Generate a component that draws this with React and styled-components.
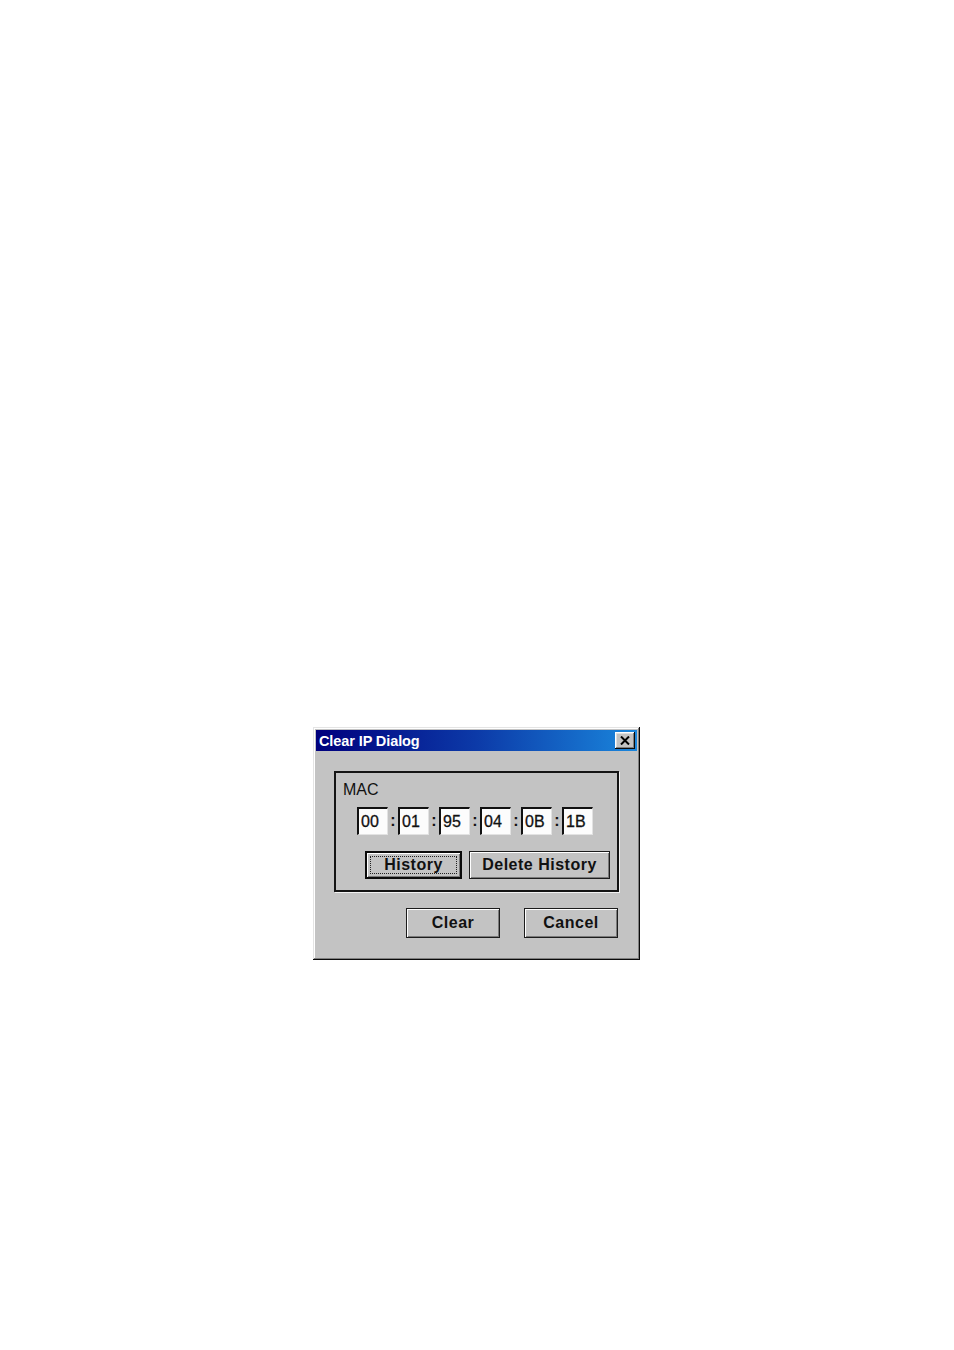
import React from 'react'
import styled, { createGlobalStyle } from 'styled-components'

const GlobalStyle = createGlobalStyle`
  html, body {
    margin: 0;
    padding: 0;
    background: #fff;
  }
  body {
    font-family: "Liberation Sans", Arial, sans-serif;
  }
`

const Page = styled.div`
  width: 954px;
  height: 1350px;
  padding: 727px 0 0 313px;
  box-sizing: border-box;
`

const Window = styled.div`
  width: 327px;
  height: 233px;
  box-sizing: border-box;
  padding: 3px;
  background: #c3c3c3;
  box-shadow: inset -1px -1px #0a0a0a, inset 1px 1px #e4e4e4,
    inset -2px -2px #808080, inset 2px 2px #ffffff;
  display: flex;
  flex-direction: column;
`

const TitleBar = styled.div`
  height: 21px;
  display: flex;
  align-items: center;
  justify-content: space-between;
  padding: 0 2px 0 3px;
  background: linear-gradient(to right, #00007d 0%, #0c3aa8 50%, #1a86dc 100%);
`

const Title = styled.span`
  color: #fff;
  font-weight: bold;
  font-size: 14.5px;
  letter-spacing: -0.1px;
`

const CloseButton = styled.div`
  width: 20px;
  height: 17px;
  background: #c3c3c3;
  box-shadow: inset -1px -1px #0a0a0a, inset 1px 1px #ffffff,
    inset -2px -2px #808080, inset 2px 2px #dfdfdf;
  display: flex;
  align-items: center;
  justify-content: center;
`

const Body = styled.div`
  flex: 1;
  display: flex;
  flex-direction: column;
  padding: 20px 18px 0 18px;
`

const Group = styled.div`
  width: 285px;
  height: 121px;
  box-sizing: border-box;
  border: 2px solid #141414;
  box-shadow: 1px 1px 0 #f2f2f2;
  padding: 8px 0 0 7px;
  display: flex;
  flex-direction: column;
`

const Label = styled.div`
  font-size: 16px;
  line-height: 18px;
  color: #111;
`

const FieldRow = styled.div`
  display: flex;
  align-items: center;
  margin: 8px 0 0 14px;
`

const Field = styled.div`
  width: 31px;
  height: 28px;
  box-sizing: border-box;
  background: #fcfcfc;
  border-top: 2px solid #111;
  border-left: 2px solid #111;
  border-right: 1px solid #e2e2e2;
  border-bottom: 1px solid #e2e2e2;
  padding: 2px 0 0 2px;
  font-size: 16px;
  line-height: 22px;
  color: #111;
  -webkit-text-stroke: 0.3px #111;
`

const Colon = styled.span`
  width: 10px;
  text-align: center;
  font-size: 16px;
  font-weight: bold;
  color: #111;
`

const ButtonRow = styled.div`
  display: flex;
  gap: ${p => p.gap}px;
  margin: ${p => p.margin};
`

const Button = styled.div`
  width: ${p => p.w}px;
  height: ${p => p.h}px;
  box-sizing: border-box;
  display: flex;
  align-items: center;
  justify-content: center;
  background: #c3c3c3;
  font-size: 16px;
  font-weight: bold;
  letter-spacing: 0.5px;
  color: #111;
  box-shadow: inset 0 0 0 1px #1c1c1c, inset 2px 2px #ffffff,
    inset -2px -2px #7a7a7a;
`

const DefaultButton = styled(Button)`
  box-shadow: inset 0 0 0 2px #0a0a0a, inset 3px 3px #ffffff,
    inset -3px -3px #7a7a7a;
`

const FocusRect = styled.span`
  display: flex;
  align-items: center;
  justify-content: center;
  width: calc(100% - 10px);
  height: calc(100% - 10px);
  box-sizing: border-box;
  border: 1px dotted #222;
`

const Footer = styled.div`
  display: flex;
  justify-content: flex-end;
  gap: 24px;
  margin: 16px 1px 0 0;
`

const mac = ['00', '01', '95', '04', '0B', '1B']

export default function App() {
  return (
    <Page>
      <GlobalStyle />
      <Window>
        <TitleBar>
          <Title>Clear IP Dialog</Title>
          <CloseButton>
            <svg width="10" height="9" viewBox="0 0 10 9">
              <path d="M1 0.5 L9 8.5 M9 0.5 L1 8.5" stroke="#000" strokeWidth="2" />
            </svg>
          </CloseButton>
        </TitleBar>
        <Body>
          <Group>
            <Label>MAC</Label>
            <FieldRow>
              {mac.map((v, i) => (
                <React.Fragment key={i}>
                  {i > 0 && <Colon>:</Colon>}
                  <Field>{v}</Field>
                </React.Fragment>
              ))}
            </FieldRow>
            <ButtonRow gap={7} margin="16px 0 0 22px">
              <DefaultButton w={97} h={28}>
                <FocusRect>History</FocusRect>
              </DefaultButton>
              <Button w={141} h={28}>Delete History</Button>
            </ButtonRow>
          </Group>
          <Footer>
            <Button w={94} h={30}>Clear</Button>
            <Button w={94} h={30}>Cancel</Button>
          </Footer>
        </Body>
      </Window>
    </Page>
  )
}
